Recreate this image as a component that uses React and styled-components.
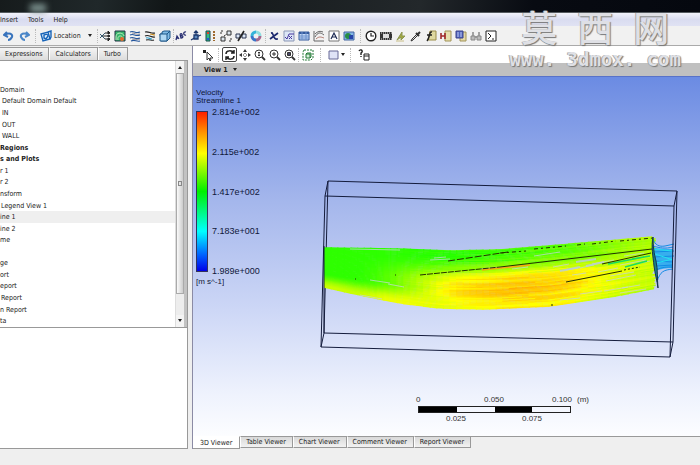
import React, { useState } from 'react';
import styled, { createGlobalStyle } from 'styled-components';

const GlobalStyle = createGlobalStyle`
  * {
    box-sizing: border-box;
  }

  body {
    margin: 0;
    background: #efefef;
    color: #222;
    font-family: 'DejaVu Sans Condensed', 'DejaVu Sans', sans-serif;
    font-size: 7px;
    overflow: hidden;
  }

  button {
    margin: 0;
    padding: 0;
    border: 0;
    background: none;
    color: inherit;
    font: inherit;
  }
`;

const Window = styled.div`
  position: relative;
  display: flex;
  flex-direction: column;
  min-height: 100vh;
`;

const TitleBar = styled.header`
  height: 13px;
  background: linear-gradient(100deg, #161b1c 0%, #20282a 14%, #111617 24%, #23282b 60%, #080b12 76%, #05080f 100%);
  border-bottom: 1px solid #555b60;
`;

const TitleGlow = styled.div`
  width: 16px;
  height: 8px;
  margin: 4px 0 0 30px;
  background: #7d9390;
  filter: blur(3px);
`;

const MenuBar = styled.nav`
  display: flex;
  align-items: center;
  gap: 10px;
  height: 13px;
  background: linear-gradient(#f2f3fb, #d9dcf0 50%, #e0e2f3);
`;

const Toolbar = styled.div`
  display: flex;
  align-items: center;
  height: 20px;
  padding-left: 1px;
  background: #f1f1f1;
  border-bottom: 1px solid #aaa;
`;

const IconButton = styled.button`
  display: flex;
  align-items: center;
  justify-content: center;
  flex: none;
  width: 15px;
  height: 15px;
  border: 1px solid ${(p) => (p.$active ? '#444' : 'transparent')};
  border-radius: 2px;

  svg {
    flex: none;
    width: 12px;
    height: 12px;
  }
`;

const Separator = styled.span`
  flex: none;
  width: 1px;
  height: 14px;
  margin: 0 ${(p) => p.$gap || 0}px;
  border-left: 1px dotted #bbb;
`;

const LocationButton = styled.button`
  display: flex;
  align-items: center;
  gap: 2px;

  svg {
    width: 12px;
    height: 12px;
  }
`;

const Caret = styled.span`
  flex: none;
  margin: 0 ${(p) => p.$gap || 0}px;
  border: 2px solid transparent;
  border-top: 3px solid #222;
  border-bottom: 0;
`;

const Main = styled.main`
  display: grid;
  grid-template-columns: 188px 1fr;
  gap: 4px;
  flex: 1;
  margin-bottom: 16px;
`;

const Sidebar = styled.section`
  display: flex;
  flex-direction: column;
  min-width: 0;
`;

const SideTabs = styled.div`
  display: flex;
  height: 14px;
  padding-top: 1px;
`;

const SideTab = styled.button`
  padding: 0 6px 0 5px;
  border: 1px solid #999;
  border-left: ${(p) => (p.$first ? 0 : 1)}px solid #fff;
  border-bottom: 0;
  background: linear-gradient(#f4f4f4, #dcdcdc);
`;

const TreePanel = styled.div`
  display: flex;
  flex: 268;
  border: 1px solid #999;
  border-left: 0;
  background: #fff;
`;

const Tree = styled.ul`
  display: grid;
  grid-auto-rows: 1fr;
  flex: 1;
  margin: 0;
  padding: 0;
  list-style: none;
`;

const TreeItem = styled.li`
  display: flex;
  align-items: center;
  padding-left: ${(p) => p.$indent || 0}px;
  background: ${(p) => (p.$selected ? '#efefef' : '#fff')};
  font-weight: ${(p) => (p.$bold ? 700 : 400)};
  line-height: 8px;
  white-space: nowrap;
`;

const Scrollbar = styled.div`
  display: flex;
  flex-direction: column;
  width: 12px;
  border-left: 1px solid #ddd;
  border-right: 3px solid #c2c2c2;
  background: #ededed;
`;

const ScrollArrow = styled.button`
  display: flex;
  align-items: center;
  justify-content: center;
  height: 12px;
  background: #f4f4f4;

  span {
    transform: ${(p) => (p.$up ? 'rotate(180deg)' : 'none')};
  }
`;

const ScrollThumb = styled.div`
  display: flex;
  align-items: center;
  justify-content: center;
  flex: 221;
  border: 1px solid #aaa;
  background: linear-gradient(to right, #fafafa, #ccc);
`;

const ThumbGrip = styled.span`
  width: 4px;
  height: 5px;
  border: 1px solid #888;
`;

const ScrollRest = styled.div`
  flex: 21;
`;

const DetailsPanel = styled.div`
  flex: 121;
  border-right: 1px solid #999;
  border-bottom: 1px solid #999;
  background: #fff;
`;

const Viewer = styled.section`
  display: flex;
  flex-direction: column;
  min-width: 0;
  border-left: 1px solid #8b8ba5;
`;

const ViewerToolbar = styled.div`
  display: flex;
  align-items: center;
  height: 17px;
  padding-left: 7px;
  background: #fff;
`;

const ViewHeader = styled.button`
  display: flex;
  align-items: center;
  gap: 5px;
  height: 13px;
  padding-left: 11px;
  background: #c0c0c0;
  font-weight: 700;
`;

const Canvas = styled.div`
  position: relative;
  flex: 1;
  border-top: 1px solid #5872c8;
  background: linear-gradient(#6b8be3, #a5b7ec 35%, #cdd7f6 65%, #eef2fd 88%, #fcfdff);
  color: #10183a;
  font-family: 'Liberation Sans', Arial, sans-serif;
  font-size: 8px;
  line-height: 8px;
`;

const Scene = styled.svg`
  position: absolute;
  inset: 0;
  width: 100%;
  height: 100%;
`;

const Legend = styled.div`
  position: relative;
  padding: 12px 0 0 3px;
`;

const LegendScale = styled.div`
  display: flex;
  gap: 4px;
  height: 167px;
  margin: 3px 0;
`;

const LegendBar = styled.div`
  width: 12px;
  margin: 3px 0;
  border: 1px solid #33335c;
  background: linear-gradient(#ff2000, #ff8c00 12%, #ffff00 26%, #00f000 50%, #00ffff 75%, #0060ff 90%, #0000e8);
`;

const LegendLabels = styled.div`
  display: flex;
  flex-direction: column;
  justify-content: space-between;
  font-size: 9px;
`;

const Ruler = styled.div`
  position: absolute;
  right: 98px;
  bottom: 13px;
  display: grid;
  grid-template-columns: 216px;
  row-gap: 2px;
  color: #333;
`;

const RulerLabels = styled.div`
  display: grid;
  grid-template-columns: ${(p) => p.$columns};
  padding-left: ${(p) => p.$indent}px;
`;

const RulerBar = styled.div`
  display: grid;
  grid-template-columns: repeat(4, 1fr);
  width: 153px;
  height: 7px;
  margin-left: 32px;
  border: 1px solid #222;

  span:nth-child(odd) {
    background: #000;
  }
`;

const ViewTabs = styled.div`
  display: flex;
  align-items: flex-start;
  height: 13px;
`;

const ViewTab = styled.button`
  height: ${(p) => (p.$active ? 13 : 12)}px;
  padding: 0 ${(p) => (p.$active ? 7 : 6)}px 0 ${(p) => (p.$active ? 7 : 5)}px;
  border: 1px solid #999;
  border-left: ${(p) => (p.$active ? 0 : 1)}px solid #fff;
  border-top-color: ${(p) => (p.$active ? '#fff' : '#999')};
  background: ${(p) => (p.$active ? '#fff' : 'linear-gradient(#d9d9d9, #f2f2f2)')};
  white-space: nowrap;
`;

const TabLine = styled.div`
  flex: 1;
  border-top: 1px solid #999;
`;

const Watermark = styled.div`
  position: absolute;
  top: 5px;
  right: 19px;
  display: flex;
  flex-direction: column;
  align-items: center;
  color: #dfe0e5;
  text-shadow: 1px 1px 1px #777, -1px 0 0 #aaa;
  pointer-events: none;
`;

const WatermarkName = styled.div`
  display: flex;
  gap: 20px;
  font-family: 'Noto Sans CJK SC', sans-serif;
  font-size: 36px;
  font-weight: 500;
  line-height: 42px;
`;

const WatermarkSite = styled.div`
  font-family: 'DejaVu Sans Mono', monospace;
  font-size: 19px;
  font-weight: 700;
  line-height: 24px;
`;

const BLUE = '#23559c';
const INK = '#222';

const icons = {
  undo: <path d="M4 2 1 5l4 2M2 5c4-3 8-1 7 2-1 2-2 3-4 3" stroke="#3974bd" strokeWidth="2" />,
  redo: <path d="m8 2 3 3-4 2m3-2C6 2 2 4 3 7c1 2 2 3 4 3" stroke="#4a86c8" strokeWidth="2" />,
  location: (
    <g stroke="#1764b8" strokeWidth="1.4">
      <path d="M1 4 8 2l2 7-7 2z" fill="#e4f1fc" />
      <path d="M4 5c2-1 4-1 4 1L6 9 4 8zM8 2l3-1v6l-1 2" />
    </g>
  ),
  vector: (
    <g stroke={INK}>
      <path d="M4 6h7M6 3h4M6 9h5" />
      <path d="m9 1 2 2-2 1zM9 5l2 1-2 1zM9 8l2 1-2 2z" fill={INK} />
      <path d="m1 4 2 2-2 2M3 6l3-3M3 6l3 3" stroke="#35576c" />
    </g>
  ),
  contour: (
    <g>
      <path d="M1 1h10v10H1z" fill="#35b56a" stroke="#234" />
      <path d="M2 10V7c0-6 8-4 8-1M4 10c-1-5 4-5 5-2" stroke="#c3ecc0" strokeWidth="1" />
      <circle cx="8" cy="9" r="2" fill="#e5682d" />
    </g>
  ),
  stream: (
    <g stroke={BLUE} strokeWidth="1.1">
      <path d="M1 2c4-2 5 2 10 0M1 5c4-2 5 2 10 0M1 8c4-2 5 2 10 0M2 11c4-2 5 1 9 0" />
      <path d="M3 3c3 0 4 2 8 1M3 9c3 0 4 1 8 0" stroke="#667" strokeWidth="0.7" />
    </g>
  ),
  particle: (
    <g stroke={INK} strokeWidth="1.2">
      <path d="M1 2c4-1 6 2 10 1M1 6c4-2 6 2 10 1M2 10c4-1 5 1 8 0" />
      <path d="M6 4c2 0 3 1 5 1" stroke="#c98c1c" />
      <path d="M2 8c2-1 4 1 6 1" stroke="#2c9dc9" />
    </g>
  ),
  volume: (
    <g stroke="#1c5687">
      <path d="M3 4V2l2-1h6v7l-3 3H2L1 4z" fill="#80bce6" />
      <path d="M1 4h7v7H1zM8 4l3-3" fill="#afd8f3" />
    </g>
  ),
  text3d: (
    <g stroke="#252c70" strokeWidth="1.3">
      <path d="m1 10 1-4 2 3M2 8h1M5 4l1 4c3 0 2-3 0-2 2-1 1-3-1-2M11 2C8 1 8 6 11 5" />
    </g>
  ),
  coord: (
    <g stroke="#1b376d" strokeWidth="1.3">
      <path d="M6 1v6l5-2M6 7l-5 3M4 3l2-2 2 2" />
      <path d="M4 5h4v4H4z" fill="#5b89be" />
    </g>
  ),
  legend: (
    <g>
      <path d="M1 1h4v10H1z" fill="#31b88a" stroke="#174b4a" />
      <path d="M2 2h2v2H2z" fill="#e43c28" />
      <path d="M2 8h2v2H2z" fill="#2559d3" />
      <path d="M9 1v10" stroke="#a06a30" strokeWidth="2" strokeDasharray="2 1" />
    </g>
  ),
  transform: (
    <g stroke="#333">
      <path d="M7 1h4v4H7zM1 7h4v4H1z" fill="#dde6ee" />
      <path d="M1 4V1h3M11 8v3H8M4 6l3-2" strokeDasharray="2 1" />
    </g>
  ),
  sliceplane: (
    <g>
      <path d="M1 4h4v4H1zM7 4h4v4H7z" stroke="#2b3550" fill="#dbe6f4" />
      <path d="M3 11 9 1" stroke={INK} strokeWidth="1.6" />
    </g>
  ),
  colormap: (
    <g strokeWidth="3">
      <path d="M6 2a4 4 0 0 1 4 4" stroke="#8fdfe0" />
      <path d="M10 6a4 4 0 0 1-4 4" stroke="#a2688f" />
      <path d="M6 10a4 4 0 0 1-4-4" stroke="#3974c8" />
      <path d="M2 6a4 4 0 0 1 4-4" stroke="#35b4d9" />
    </g>
  ),
  variable: <path d="M3 3c3-1 2 7 6 6M10 3 2 9M3 3h2M8 9h2" stroke="#1c286e" strokeWidth="1.7" />,
  expression: (
    <g>
      <path d="M1 1h10v10H1z" fill="#dce6f6" stroke="#8b97b5" />
      <path d="m2 7 2 2 2-5h5M6 9l3-3M6 6l3 3" stroke="#4838a0" />
    </g>
  ),
  table: (
    <g>
      <path d="M1 2h10v8H1z" fill="#c4d9f6" stroke="#345b9d" />
      <path d="M1 3h10" stroke="#345b9d" strokeWidth="2" />
      <path d="M1 6h10M1 8h10M4 2v8M8 2v8" stroke="#6a90cc" />
    </g>
  ),
  chart: (
    <g stroke="#666">
      <path d="M1 1v10h10" />
      <path d="M2 7c3-5 5-5 9-2M2 4c3-3 5-3 8-2" />
      <path d="M3 9c3-3 5-2 8-1" stroke="#b78278" />
    </g>
  ),
  annotation: (
    <g>
      <path d="M1 1h10v10H1z" fill="#fff" stroke="#777" />
      <path d="m3 9 3-6 3 6M4 7h4" stroke="#1f2d55" strokeWidth="1.2" />
    </g>
  ),
  figure: (
    <g>
      <path d="M1 2h10v8H1z" fill="#85b6e9" stroke="#4567a0" />
      <circle cx="5" cy="6" r="3" fill="#278d45" />
      <path d="M6 5h4v4H6z" fill="#2644a8" />
    </g>
  ),
  clock: (
    <g stroke={INK}>
      <circle cx="6" cy="6" r="4.8" fill="#fff" strokeWidth="1.4" />
      <path d="M6 3v3h3" strokeWidth="1.2" />
    </g>
  ),
  film: (
    <g>
      <path d="M0 2h12v8H0z" fill="#333" />
      <path d="M3 4h6v4H3z" fill="#ddd" />
      <path d="M1 3h11M1 9h11" stroke="#ddd" strokeDasharray="1 1" />
    </g>
  ),
  quick: (
    <g>
      <path d="m2 10 5-8v4h3l-4 4V7z" fill="#a3a840" stroke="#8a9650" />
      <path d="M1 11h8" stroke="#cabf87" />
    </g>
  ),
  probe: (
    <g stroke="#333">
      <path d="m1 11 1-2 5-5 1 1-5 5z" fill="#ddd" />
      <path d="m6 3 3 3M8 4l2-2" strokeWidth="2" />
    </g>
  ),
  functionCalc: (
    <g>
      <path d="M5 1h6v9H3z" fill="#ded8a0" stroke="#9b8d48" />
      <path d="M7 2C4 1 5 8 2 11M2 5h5" stroke={INK} strokeWidth="1.5" />
    </g>
  ),
  macro: (
    <g>
      <path d="M5 1h6v10H5z" fill="#e7dfad" stroke="#a29459" />
      <path d="M1 3v6M5 3v6M1 6h4" stroke="#a1292a" strokeWidth="1.6" />
    </g>
  ),
  mesh: (
    <g>
      <path d="M5 2h6v9H5z" fill="#e2d8a7" stroke="#a29459" />
      <path d="M1 1h7v7H1z" fill="#5066bd" stroke="#3c438d" />
      <path d="M3 2v5M6 2v5" stroke="#c1c9f4" />
    </g>
  ),
  compare: (
    <g stroke="#888">
      <path d="M1 6h4v4H1zM7 6h4v4H7z" fill="#bbb" />
      <path d="M3 6V2M9 6V2M5 7h2" strokeWidth="1.5" />
    </g>
  ),
  command: (
    <g stroke={INK}>
      <path d="M1 1h10v10H1z" fill="#fff" />
      <path d="m3 3 3 3-3 3M7 9h2" />
    </g>
  ),
  select: (
    <g>
      <path d="M1 1h3v3H1z" fill={INK} />
      <path d="M5 3v8l2-2 1 3 1-1-1-2h3z" stroke="#333" fill="#fff" />
    </g>
  ),
  rotate: (
    <path d="M2 5c0-4 6-4 8-1M10 1v3H7M10 7c0 4-6 4-8 1M2 11V8h3" stroke={INK} strokeWidth="1.5" />
  ),
  pan: (
    <g fill="#333">
      <path d="m6 0 2 3H4zM6 12l2-3H4zM0 6l3-2v4zM12 6 9 4v4z" />
      <path d="M5 4h2v1H5zM5 7h2v1H5zM4 5h1v2H4zM7 5h1v2H7z" fill="#999" />
    </g>
  ),
  zoom: (
    <g stroke="#333">
      <circle cx="5" cy="5" r="4" fill="#fff" />
      <path d="m8 8 3 3" strokeWidth="1.8" />
      <path d="M5 3v4M4 4l1-1 1 1M4 6l1 1 1-1" />
    </g>
  ),
  zoomIn: (
    <g stroke="#333">
      <circle cx="5" cy="5" r="4" fill="#fff" />
      <path d="m8 8 3 3" strokeWidth="1.8" />
      <path d="M3 5h4M5 3v4" />
    </g>
  ),
  zoomBox: (
    <g stroke="#333">
      <circle cx="5" cy="5" r="4" fill="#fff" />
      <path d="m8 8 3 3" strokeWidth="1.8" />
      <path d="M3.5 3.5h3v3h-3z" fill="#446" />
    </g>
  ),
  fit: (
    <g stroke="#237a36">
      <path d="M2 1h9v8l-2 2H1V3z" strokeDasharray="2 1" />
      <path d="M4 5h4v4H4zM4 5l1-1h4v4L8 9" fill="#d5ecd8" />
    </g>
  ),
  layout: <path d="M1 2h9v8H1z" fill="#dfe3f7" stroke="#666996" />,
  help: (
    <g stroke={INK}>
      <path d="M1 2c1-2 4-1 3 1L3 4v2M3 7v1" strokeWidth="1.4" />
      <path d="M6 5h5v6H6zM6 7h5" />
    </g>
  ),
};

const Icon = ({ name }) => (
  <svg viewBox="0 0 12 12" fill="none" aria-hidden="true">
    {icons[name]}
  </svg>
);

const Tools = ({ names, active }) =>
  names.map((name) => (
    <IconButton key={name} aria-label={name} $active={name === active}>
      <Icon name={name} />
    </IconButton>
  ));

const treeItems = [
  { text: '' },
  { text: '' },
  { text: 'Domain' },
  { text: 'Default Domain Default', indent: 2 },
  { text: 'IN', indent: 2 },
  { text: 'OUT', indent: 2 },
  { text: 'WALL', indent: 2 },
  { text: 'Regions', bold: true },
  { text: 's and Plots', bold: true },
  { text: 'r 1' },
  { text: 'r 2' },
  { text: 'nsform' },
  { text: 'Legend View 1', indent: 1 },
  { text: 'ine 1', selected: true },
  { text: 'ine 2' },
  { text: 'me' },
  { text: '' },
  { text: 'ge' },
  { text: 'ort' },
  { text: 'eport' },
  { text: 'Report', indent: 1 },
  { text: 'n Report' },
  { text: 'ta' },
];

const legendValues = ['2.814e+002', '2.115e+002', '1.417e+002', '7.183e+001', '1.989e+000'];

const viewTabs = ['3D Viewer', 'Table Viewer', 'Chart Viewer', 'Comment Viewer', 'Report Viewer'];

const ramp = (value, from, to) => {
  const k = Math.min(1, Math.max(0, (value - from) / (to - from)));
  return k * k * (3 - 2 * k);
};

// piecewise-linear outline of the streamline bundle
const topEdge = [[324, 248], [400, 249], [450, 251], [500, 250], [560, 245], [654, 237]];
const bottomEdge = [[324, 287], [360, 295], [400, 303], [440, 308], [485, 309], [550, 306], [610, 297], [657, 288]];

const edgeAt = (edge, x) => {
  for (let i = 1; i < edge.length; i++) {
    if (x <= edge[i][0] || i === edge.length - 1) {
      const [x0, y0] = edge[i - 1];
      const [x1, y1] = edge[i];
      return y0 + ((x - x0) / (x1 - x0)) * (y1 - y0);
    }
  }
  return 0;
};

const noise = (n) => {
  const s = Math.sin(n * 127.1) * 43758.5453;
  return s - Math.floor(s);
};

const speedColor = (u, t, jitter) => {
  const bump = Math.exp(-(((u - 0.56) / 0.22) ** 2) - ((t - 0.66) / 0.3) ** 2);
  let v = 0.04 + 0.66 * ramp(u, 0.08, 0.42) * ramp(t, 0.1, 0.6) + 0.18 * bump;
  v += 0.5 * ramp(t, 0.65, 1) * (1 - ramp(u, 0.15, 0.38));
  v += 0.16 * ramp(u, 0.3, 0.8) * (1 - t);
  v += (0.5 - v) * ramp(u, 0.7, 1) * 0.85;
  v += (jitter - 0.5) * 0.16 * ramp(u, 0.15, 0.5);
  return `hsl(${Math.round(112 - Math.min(1, Math.max(0, v)) * 72)}, 100%, 50%)`;
};

const ROWS = 52;
const COLS = 50;
const strands = [];
for (let row = 0; row <= ROWS; row++) {
  const t = row / ROWS;
  const shift = noise(row + 3) * 12;
  for (let col = 0; col < COLS; col++) {
    const u0 = col / COLS;
    const u1 = (col + 1) / COLS + 0.004;
    const x0 = 324 + u0 * 330;
    const x1 = 324 + u1 * 330 + (col === COLS - 1 ? noise(row) * 4 - 3 : 0);
    const y0 = edgeAt(topEdge, x0) * (1 - t) + edgeAt(bottomEdge, x0) * t;
    const y1 = edgeAt(topEdge, x1) * (1 - t) + edgeAt(bottomEdge, x1) * t;
    strands.push({
      d: `M${x0.toFixed(1)} ${y0.toFixed(1)}L${x1.toFixed(1)} ${y1.toFixed(1)}`,
      color: speedColor(u0, t, noise(row * 7 + Math.floor((col + shift) / 12))),
    });
  }
}

const gaps = [
  'M430 260l20-1', 'M434 258l12-1', 'M370 280l20 3', 'M388 284l16 3', 'M502 268l10-1', 'M480 269l24-2',
  'M512 269l16-2', 'M553 267l16-3', 'M566 270l12-2', 'M580 268l14-3', 'M592 264l22-4', 'M598 272l20-4',
  'M610 276l24-4', 'M620 265l26-5', 'M606 281l30-6', 'M572 275l14-2', 'M640 263l10-2', 'M580 294l22-3',
  'M604 291l24-4', 'M622 288l18-3', 'M560 300l20-2', 'M620 293l26-4', 'M534 256l26-4', 'M624 256l20-3',
  'M350 249l50 1', 'M360 295l22 4',
];

const SceneDrawing = () => (
  <Scene viewBox="193 77 507 359" fill="none" role="img" aria-label="Streamlines inside the domain box">
    <g stroke="#141c3c">
      <path d="M328 181 677 191 673 342 324 333z" />
      <path d="M325 196 674 206" />
    </g>
    <g strokeWidth="1.5">
      {strands.map((s, i) => (
        <path key={i} d={s.d} stroke={s.color} />
      ))}
    </g>
    <path d={gaps.join('')} stroke="#c5d5d5" strokeWidth="1" opacity="0.75" />
    <path d="M560 271l20-4M586 266l18-4M576 262l20-3" stroke="#b9cbe0" strokeWidth="2" opacity="0.8" />
    <path d="M608 264l36-7M625 267l22-6M632 259l18-3" stroke="#19dc60" strokeWidth="1.5" />
    <path d="M530 265l-48 5" stroke="#ffa510" strokeWidth="1.5" />
    <g stroke="#243000">
      <path d="M420 275 500 267" strokeDasharray="6 1" />
      <path d="M500 267 652 249" />
      <path d="M448 261 508 252" strokeDasharray="7 2" />
      <path d="M500 253l26-2M534 249l32-3M577 245l8-1M592 244l24-3M620 241l33-3" strokeDasharray="4 3 2 3" />
      <path d="M602 264 651 253M566 282 622 271" />
      <path d="M624 270l16-3" strokeDasharray="2 2" />
      <path d="M355 279h1M395 275h1M551 305h2" />
    </g>
    <path d="M652 247c7 2 14 2 21 2v19c-7 0-13 1-18 3z" fill="#16a8ee" opacity="0.8" />
    <g stroke="#138be5">
      <path d="M653 239c2 6 6 8 12 7l9-2M653 246c7 2 12 3 20 1M653 252l21-1M653 257l21-1M655 261l18 1M656 266l17-1M656 270c6-3 10-3 17-3M657 282c3-11 7-12 16-13" />
      <path d="M654 249l18 2M656 263l17-4M655 254l18 6" stroke="#21e1ef" />
    </g>
    <path d="M653 237c-2 10 0 19 1 29 1 8 3 14 4 22-1-10 0-18-2-27-2-8-3-14-3-24z" stroke="#17354b" fill="#16828d" />
    <g stroke="#141c3c">
      <path d="M328 181 325 196 321 347 670 357 674 206 677 191M324 333l-3 14M673 342l-3 15" />
      <path d="M324 246v87" />
    </g>
  </Scene>
);

const App = () => {
  const [tab, setTab] = useState('3D Viewer');

  return (
    <Window>
      <GlobalStyle />
      <TitleBar>
        <TitleGlow />
      </TitleBar>
      <MenuBar>
        <button>Insert</button>
        <button>Tools</button>
        <button>Help</button>
      </MenuBar>
      <Toolbar>
        <Tools names={['undo', 'redo']} />
        <Separator $gap={4} />
        <LocationButton>
          <Icon name="location" />
          Location
          <Caret $gap={5} />
        </LocationButton>
        <Separator />
        <Tools names={['vector', 'contour', 'stream', 'particle', 'volume']} />
        <Separator />
        <Tools names={['text3d', 'coord', 'legend', 'transform', 'sliceplane', 'colormap']} />
        <Separator $gap={1} />
        <Tools names={['variable', 'expression', 'table', 'chart', 'annotation', 'figure']} />
        <Separator $gap={3} />
        <Tools
          names={['clock', 'film', 'quick', 'probe', 'functionCalc', 'macro', 'mesh', 'compare', 'command']}
        />
      </Toolbar>
      <Main>
        <Sidebar>
          <SideTabs>
            <SideTab $first>Expressions</SideTab>
            <SideTab>Calculators</SideTab>
            <SideTab>Turbo</SideTab>
          </SideTabs>
          <TreePanel>
            <Tree>
              {treeItems.map((item, i) => (
                <TreeItem key={i} $indent={item.indent} $bold={item.bold} $selected={item.selected}>
                  {item.text}
                </TreeItem>
              ))}
            </Tree>
            <Scrollbar>
              <ScrollArrow $up aria-label="Scroll up">
                <Caret />
              </ScrollArrow>
              <ScrollThumb>
                <ThumbGrip />
              </ScrollThumb>
              <ScrollRest />
              <ScrollArrow aria-label="Scroll down">
                <Caret />
              </ScrollArrow>
            </Scrollbar>
          </TreePanel>
          <DetailsPanel />
        </Sidebar>
        <Viewer>
          <ViewerToolbar>
            <Tools names={['select']} />
            <Separator $gap={3} />
            <Tools names={['rotate', 'pan', 'zoom', 'zoomIn', 'zoomBox']} active="rotate" />
            <Separator $gap={1} />
            <Tools names={['fit']} />
            <Separator $gap={5} />
            <Tools names={['layout']} />
            <Caret />
            <Separator $gap={5} />
            <Tools names={['help']} />
          </ViewerToolbar>
          <ViewHeader>
            View 1
            <Caret />
          </ViewHeader>
          <Canvas>
            <SceneDrawing />
            <Legend>
              <div>Velocity</div>
              <div>Streamline 1</div>
              <LegendScale>
                <LegendBar />
                <LegendLabels>
                  {legendValues.map((value) => (
                    <span key={value}>{value}</span>
                  ))}
                </LegendLabels>
              </LegendScale>
              <div>[m s^-1]</div>
            </Legend>
            <Ruler>
              <RulerLabels $indent={30} $columns="68px 68px 25px auto">
                <span>0</span>
                <span>0.050</span>
                <span>0.100</span>
                <span>(m)</span>
              </RulerLabels>
              <RulerBar>
                <span />
                <span />
                <span />
                <span />
              </RulerBar>
              <RulerLabels $indent={60} $columns="76px auto">
                <span>0.025</span>
                <span>0.075</span>
              </RulerLabels>
            </Ruler>
          </Canvas>
          <ViewTabs>
            {viewTabs.map((name) => (
              <ViewTab key={name} $active={tab === name} onClick={() => setTab(name)}>
                {name}
              </ViewTab>
            ))}
            <TabLine />
          </ViewTabs>
        </Viewer>
      </Main>
      <Watermark>
        <WatermarkName>
          <span>莫</span>
          <span>西</span>
          <span>网</span>
        </WatermarkName>
        <WatermarkSite>www. 3dmox. com</WatermarkSite>
      </Watermark>
    </Window>
  );
};

export default App;
